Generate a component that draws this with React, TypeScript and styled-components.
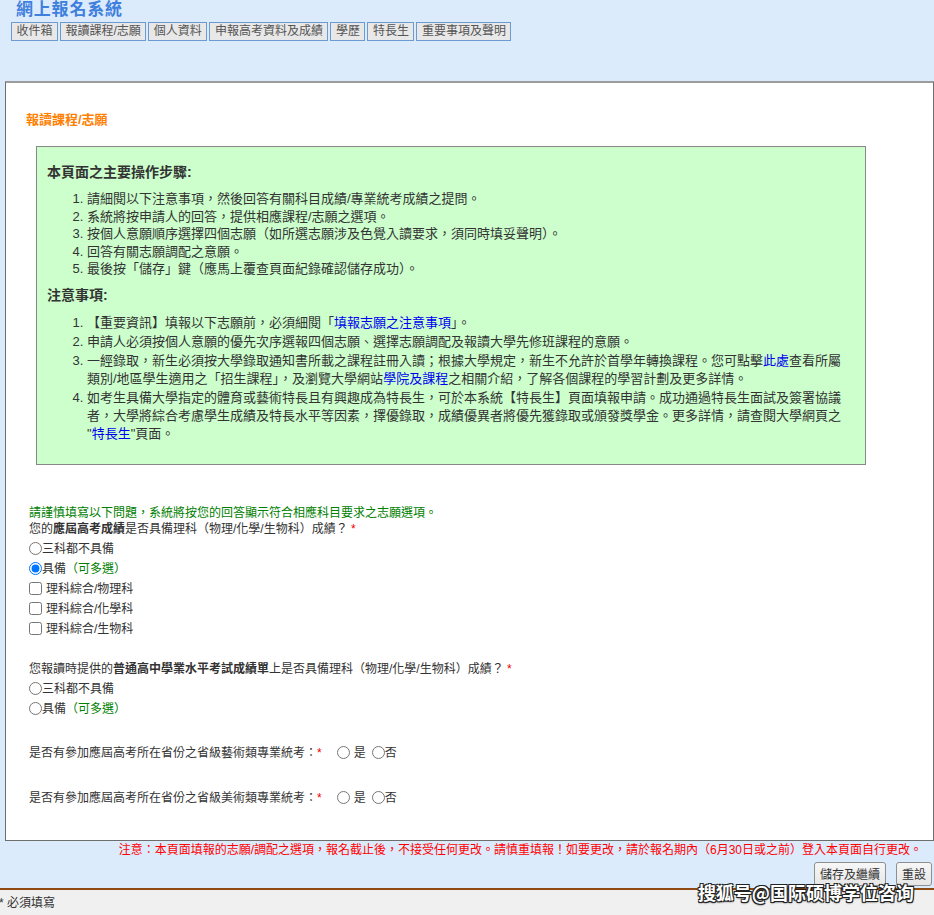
import React from 'react';
import styled, { createGlobalStyle } from 'styled-components';

const GlobalStyle = createGlobalStyle`
  html, body {
    margin: 0;
    padding: 0;
  }
  body {
    background: #dcebfc;
    font-family: "Liberation Sans", "Noto Sans CJK TC", sans-serif;
    font-size: 13px;
    color: #333;
  }
`;

const Page = styled.div`
  position: relative;
  height: 915px;
  overflow: hidden;
  display: flex;
  flex-direction: column;
`;

const Title = styled.h1`
  margin: 0 0 0 16px;
  height: 22px;
  font-size: 17px;
  line-height: 20px;
  letter-spacing: 0.8px;
  font-weight: bold;
  color: #3f80dc;
`;

const TabBar = styled.div`
  display: flex;
  gap: 2px;
  margin-left: 11px;
`;

const Tab = styled.span`
  display: inline-block;
  box-sizing: border-box;
  height: 19px;
  padding: 0 4.5px;
  border: 1px solid #6c9bd2;
  background: #e8e8e8;
  font-size: 12px;
  line-height: 17px;
  color: #555;
`;

const Panel = styled.div`
  margin: 40px 0 0 5px;
  background: #fff;
  border: 1px solid #6e6e6e;
  border-top: 2px solid #9c9c9c;
  padding-bottom: 32px;
`;

const SectionTitle = styled.div`
  margin: 28px 0 0 20px;
  font-size: 13px;
  line-height: 18px;
  font-weight: bold;
  color: #ff8000;
`;

const InfoBox = styled.div`
  box-sizing: border-box;
  width: 830px;
  margin: 17px 0 0 30px;
  padding: 0 10px 21px;
  background: #ccffcc;
  border: 1px solid #888;
`;

const BoxHeading = styled.div<{ $top: number; $bottom: number }>`
  margin: ${(p) => p.$top}px 0 ${(p) => p.$bottom}px;
  font-size: 14px;
  line-height: 18px;
  font-weight: bold;
  color: #333;
`;

const StepList = styled.ol`
  margin: 0;
  padding: 0 0 0 40px;
  font-size: 13px;
  line-height: 17.5px;
`;

const NoteList = styled.ol`
  margin: 0;
  padding: 0 10px 0 40px;
  font-size: 13px;
  line-height: 18px;
  li + li {
    margin-top: 1px;
  }
`;

const Link = styled.span`
  color: #0000ee;
`;

const Form = styled.div`
  margin-top: 40px;
  padding-left: 23px;
  font-size: 12px;
  line-height: 16px;
`;

const GreenText = styled.span`
  color: #008000;
`;

const Question = styled.div<{ $gap: number }>`
  margin-top: ${(p) => p.$gap}px;
  line-height: 16px;
`;

const Required = styled.span`
  color: #e00;
`;

const OptionRow = styled.label`
  display: flex;
  align-items: center;
  height: 20px;
  &:first-of-type {
    margin-top: 2px;
  }
`;

const Radio = styled.input.attrs({ type: 'radio' })<{ $left?: number }>`
  width: 13px;
  height: 13px;
  margin: 0 0 0 ${(p) => p.$left ?? 0}px;
`;

const Check = styled.input.attrs({ type: 'checkbox' })`
  width: 13px;
  height: 13px;
  margin: 0 4px 0 0;
`;

const InlineQuestion = styled.div<{ $gap: number }>`
  display: flex;
  align-items: center;
  height: 20px;
  margin-top: ${(p) => p.$gap}px;
`;

const Space = styled.span<{ $w: number }>`
  display: inline-block;
  width: ${(p) => p.$w}px;
`;

const RedNote = styled.div`
  margin-top: 1px;
  padding-right: 12px;
  text-align: right;
  font-size: 12px;
  line-height: 16px;
  color: #ff0000;
`;

const ButtonRow = styled.div`
  display: flex;
  justify-content: flex-end;
  gap: 10px;
  margin-top: 4px;
  padding-right: 2px;
`;

const Button = styled.button`
  box-sizing: border-box;
  height: 24px;
  padding: 0 5px;
  border: 1px solid #8f8f8f;
  border-radius: 3px;
  background: linear-gradient(#f7f7f7, #e6e6e6);
  font-family: inherit;
  font-size: 12px;
  color: #333;
`;

const Footer = styled.div`
  flex: 1;
  margin-top: 2px;
  border-top: 2px solid #8e4a12;
  background: #f0f0f0;
  padding-top: 5px;
  font-size: 12px;
  line-height: 16px;
  span {
    margin-left: -1px;
  }
`;

const Watermark = styled.div`
  position: absolute;
  right: 20px;
  top: 880px;
  font-family: "Noto Sans CJK SC", sans-serif;
  font-size: 18px;
  line-height: 24px;
  font-weight: bold;
  color: #fff;
  text-shadow: -1px -1px 0 #222, 1px -1px 0 #222, -1px 1px 0 #222, 1px 1px 0 #222,
    0 1px 2px #000;
`;

const tabs = ['收件箱', '報讀課程/志願', '個人資料', '申報高考資料及成績', '學歷', '特長生', '重要事項及聲明'];

const steps = [
  '請細閱以下注意事項，然後回答有關科目成績/專業統考成績之提問。',
  '系統將按申請人的回答，提供相應課程/志願之選項。',
  '按個人意願順序選擇四個志願（如所選志願涉及色覺入讀要求，須同時填妥聲明）。',
  '回答有關志願調配之意願。',
  '最後按「儲存」鍵（應馬上覆查頁面紀錄確認儲存成功）。',
];

const subjects = ['理科綜合/物理科', '理科綜合/化學科', '理科綜合/生物科'];

const App: React.FC = () => {
  return (
    <Page>
      <GlobalStyle />
      <Title>網上報名系統</Title>
      <TabBar>
        {tabs.map((t) => (
          <Tab key={t}>{t}</Tab>
        ))}
      </TabBar>

      <Panel>
        <SectionTitle>報讀課程/志願</SectionTitle>
        <InfoBox>
          <BoxHeading $top={16} $bottom={9}>本頁面之主要操作步驟:</BoxHeading>
          <StepList>
            {steps.map((s) => (
              <li key={s}>{s}</li>
            ))}
          </StepList>
          <BoxHeading $top={8} $bottom={10}>注意事項:</BoxHeading>
          <NoteList>
            <li>
              【重要資訊】填報以下志願前，必須細閱「<Link>填報志願之注意事項</Link>」。
            </li>
            <li>申請人必須按個人意願的優先次序選報四個志願、選擇志願調配及報讀大學先修班課程的意願。</li>
            <li>
              一經錄取，新生必須按大學錄取通知書所載之課程註冊入讀；根據大學規定，新生不允許於首學年轉換課程。您可點擊
              <Link>此處</Link>查看所屬類別/地區學生適用之「招生課程」，及瀏覽大學網站<Link>學院及課程</Link>
              之相關介紹，了解各個課程的學習計劃及更多詳情。
            </li>
            <li>
              如考生具備大學指定的體育或藝術特長且有興趣成為特長生，可於本系統【特長生】頁面填報申請。成功通過特長生面試及簽署協議者，大學將綜合考慮學生成績及特長水平等因素，擇優錄取，成績優異者將優先獲錄取或頒發獎學金。更多詳情，請查閱大學網頁之
              "<Link>特長生</Link>"頁面。
            </li>
          </NoteList>
        </InfoBox>

        <Form>
          <GreenText>請謹慎填寫以下問題，系統將按您的回答顯示符合相應科目要求之志願選項。</GreenText>
          <Question $gap={0}>
            您的<b>應屆高考成績</b>是否具備理科（物理/化學/生物科）成績？ <Required>*</Required>
          </Question>
          <div>
            <OptionRow>
              <Radio name="q1" />
              三科都不具備
            </OptionRow>
            <OptionRow>
              <Radio name="q1" defaultChecked />
              具備<GreenText>（可多選）</GreenText>
            </OptionRow>
            {subjects.map((s) => (
              <OptionRow key={s}>
                <Check />
                {s}
              </OptionRow>
            ))}
          </div>

          <Question $gap={22}>
            您報讀時提供的<b>普通高中學業水平考試成績單</b>上是否具備理科（物理/化學/生物科）成績？{' '}
            <Required>*</Required>
          </Question>
          <div>
            <OptionRow>
              <Radio name="q2" />
              三科都不具備
            </OptionRow>
            <OptionRow>
              <Radio name="q2" />
              具備<GreenText>（可多選）</GreenText>
            </OptionRow>
          </div>

          <InlineQuestion $gap={24}>
            是否有參加應屆高考所在省份之省級藝術類專業統考：<Required>*</Required>
            <Radio name="q3" $left={15} />
            <Space $w={4} />是<Space $w={6} />
            <Radio name="q3" />否
          </InlineQuestion>
          <InlineQuestion $gap={25}>
            是否有參加應屆高考所在省份之省級美術類專業統考：<Required>*</Required>
            <Radio name="q4" $left={15} />
            <Space $w={4} />是<Space $w={6} />
            <Radio name="q4" />否
          </InlineQuestion>
        </Form>
      </Panel>

      <RedNote>
        注意：本頁面填報的志願/調配之選項，報名截止後，不接受任何更改。請慎重填報！如要更改，請於報名期內（6月30日或之前）登入本頁面自行更改。
      </RedNote>
      <ButtonRow>
        <Button>儲存及繼續</Button>
        <Button>重設</Button>
      </ButtonRow>
      <Footer>
        <span>* 必須填寫</span>
      </Footer>
      <Watermark>搜狐号@国际硕博学位咨询</Watermark>
    </Page>
  );
};

export default App;
